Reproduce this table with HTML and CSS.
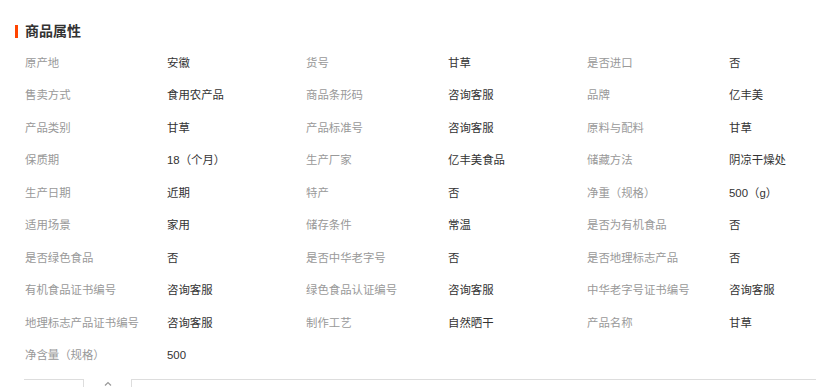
FILE: index.html
```html
<!DOCTYPE html>
<html lang="zh-CN">
<head>
<meta charset="utf-8">
<link rel="stylesheet" href="styles.css">
</head>
<body>
<div class="section">
  <h2 class="title"><span class="bar"></span>商品属性</h2>
  <div class="props">
    <span class="k">原产地</span><span class="v">安徽</span>
    <span class="k">货号</span><span class="v">甘草</span>
    <span class="k">是否进口</span><span class="v">否</span>

    <span class="k">售卖方式</span><span class="v">食用农产品</span>
    <span class="k">商品条形码</span><span class="v">咨询客服</span>
    <span class="k">品牌</span><span class="v">亿丰美</span>

    <span class="k">产品类别</span><span class="v">甘草</span>
    <span class="k">产品标准号</span><span class="v">咨询客服</span>
    <span class="k">原料与配料</span><span class="v">甘草</span>

    <span class="k">保质期</span><span class="v">18（个月）</span>
    <span class="k">生产厂家</span><span class="v">亿丰美食品</span>
    <span class="k">储藏方法</span><span class="v">阴凉干燥处</span>

    <span class="k">生产日期</span><span class="v">近期</span>
    <span class="k">特产</span><span class="v">否</span>
    <span class="k">净重（规格）</span><span class="v">500（g）</span>

    <span class="k">适用场景</span><span class="v">家用</span>
    <span class="k">储存条件</span><span class="v">常温</span>
    <span class="k">是否为有机食品</span><span class="v">否</span>

    <span class="k">是否绿色食品</span><span class="v">否</span>
    <span class="k">是否中华老字号</span><span class="v">否</span>
    <span class="k">是否地理标志产品</span><span class="v">否</span>

    <span class="k">有机食品证书编号</span><span class="v">咨询客服</span>
    <span class="k">绿色食品认证编号</span><span class="v">咨询客服</span>
    <span class="k">中华老字号证书编号</span><span class="v">咨询客服</span>

    <span class="k">地理标志产品证书编号</span><span class="v">咨询客服</span>
    <span class="k">制作工艺</span><span class="v">自然晒干</span>
    <span class="k">产品名称</span><span class="v">甘草</span>

    <span class="k">净含量（规格）</span><span class="v">500</span>
  </div>
  <div class="footer">
    <div class="tab-left"></div>
    <div class="caret"><svg width="8" height="5" viewBox="0 0 8 5"><path d="M1 4.5 L4 1.5 L7 4.5" fill="none" stroke="#999" stroke-width="1.2"/></svg></div>
    <div class="tab-right"></div>
  </div>
</div>
</body>
</html>
```
FILE: styles.css
```css
html, body {
  margin: 0;
  padding: 0;
  background: #fff;
}
body {
  font-family: "Liberation Sans", "Noto Sans CJK SC", sans-serif;
  width: 816px;
  height: 387px;
  overflow: hidden;
}
.section {
  padding-top: 24px;
}
.title {
  display: flex;
  align-items: center;
  margin: 0;
  padding-left: 15px;
  height: 14px;
  font-size: 14px;
  font-weight: bold;
  color: #333;
  line-height: 14px;
}
.bar {
  width: 3px;
  height: 13px;
  background: #ff4400;
  margin-right: 7px;
}
.props {
  margin-top: 8.8px;
  padding-left: 25px;
  display: grid;
  grid-template-columns: 142px 139px 142px 139px 142px minmax(0, 1fr);
  grid-auto-rows: 32.44px;
  align-items: center;
  font-size: 11.4px;
  line-height: 14px;
}
.k {
  color: #999;
  white-space: nowrap;
}
.v {
  color: #333;
  white-space: nowrap;
}
.footer {
  display: flex;
  margin-top: 8px;
  padding-left: 24px;
  height: 20px;
}
.tab-left {
  width: 59px;
  border-top: 1px solid #ddd;
  border-right: 1px solid #ddd;
}
.caret {
  width: 47px;
  display: flex;
  justify-content: center;
  padding-top: 2px;
}
.tab-right {
  flex: 1;
  border-top: 1px solid #ddd;
  border-left: 1px solid #ddd;
}
```
